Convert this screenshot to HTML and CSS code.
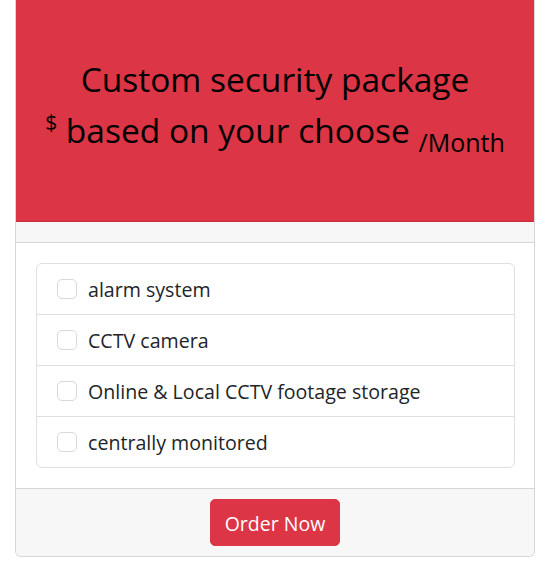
FILE: index.html
```html
<!DOCTYPE html>
<html lang="en">
<head>
<meta charset="utf-8">
<title>Custom security package</title>
<link rel="stylesheet" href="styles.css">
</head>
<body>
<div class="card">
  <div class="card-top">
    <h2 class="title">Custom security package</h2>
    <h2 class="price"><span class="cur">$</span> based on your choose <small class="per">/Month</small></h2>
  </div>
  <div class="card-header"></div>
  <div class="card-body">
    <ul class="list">
      <li class="item"><span class="check"></span><span>alarm system</span></li>
      <li class="item"><span class="check"></span><span>CCTV camera</span></li>
      <li class="item"><span class="check"></span><span>Online &amp; Local CCTV footage storage</span></li>
      <li class="item"><span class="check"></span><span>centrally monitored</span></li>
    </ul>
  </div>
  <div class="card-footer">
    <button class="btn">Order Now</button>
  </div>
</div>
</body>
</html>
```
FILE: styles.css
```css
* { box-sizing: border-box; }
html, body { margin: 0; padding: 0; background: #fff; }
body {
  font-family: "Open Sans", "Noto Sans", sans-serif;
  color: #212529;
}
.card {
  margin-left: 15px;
  width: 520px;
  border: 1px solid #d6d6d6;
  border-top: none;
  border-radius: 0 0 6px 6px;
  overflow: hidden;
}
.card-top {
  background: #dc3545;
  height: 222px;
  border-bottom: 1px solid #c22f3d;
  display: flex;
  flex-direction: column;
  align-items: center;
  padding-top: 57px;
  color: #000;
}
.title, .price {
  margin: 0;
  font-weight: 400;
  font-size: 33.5px;
  white-space: nowrap;
}
.title { line-height: 44px; }
.price { line-height: 52px; margin-top: 3px; }
.cur {
  font-size: 21px;
  vertical-align: 13px;
  line-height: 0;
}
.per {
  font-size: 25px;
  vertical-align: -9px;
  line-height: 0;
}
.card-header {
  height: 21px;
  background: #f7f7f7;
  border-bottom: 1px solid #d6d6d6;
}
.card-body { padding: 20px 19px 20px 20px; }
.list {
  list-style: none;
  margin: 0;
  padding: 0;
  border: 1px solid #e0e0e0;
  border-radius: 6px;
}
.item {
  display: flex;
  align-items: center;
  gap: 11px;
  padding: 13px 20px 11px;
  line-height: 26px;
  font-size: 19.6px;
  border-top: 1px solid #e0e0e0;
}
.item:first-child { border-top: none; }
.check {
  width: 20px;
  height: 20px;
  border: 1px solid #d9d9d9;
  border-radius: 5px;
  background: #fff;
  flex: none;
  margin-top: -2px;
}
.card-footer {
  background: #f7f7f7;
  border-top: 1px solid #d6d6d6;
  padding: 10px 0;
  display: flex;
  justify-content: center;
}
.btn {
  font-family: inherit;
  background: #dc3545;
  color: #fff;
  border: 1px solid #dc3545;
  border-radius: 5px;
  font-size: 19.5px;
  line-height: 28px;
  padding: 3px 0 0;
  height: 47px;
  width: 130px;
  white-space: nowrap;
  cursor: pointer;
}
```
